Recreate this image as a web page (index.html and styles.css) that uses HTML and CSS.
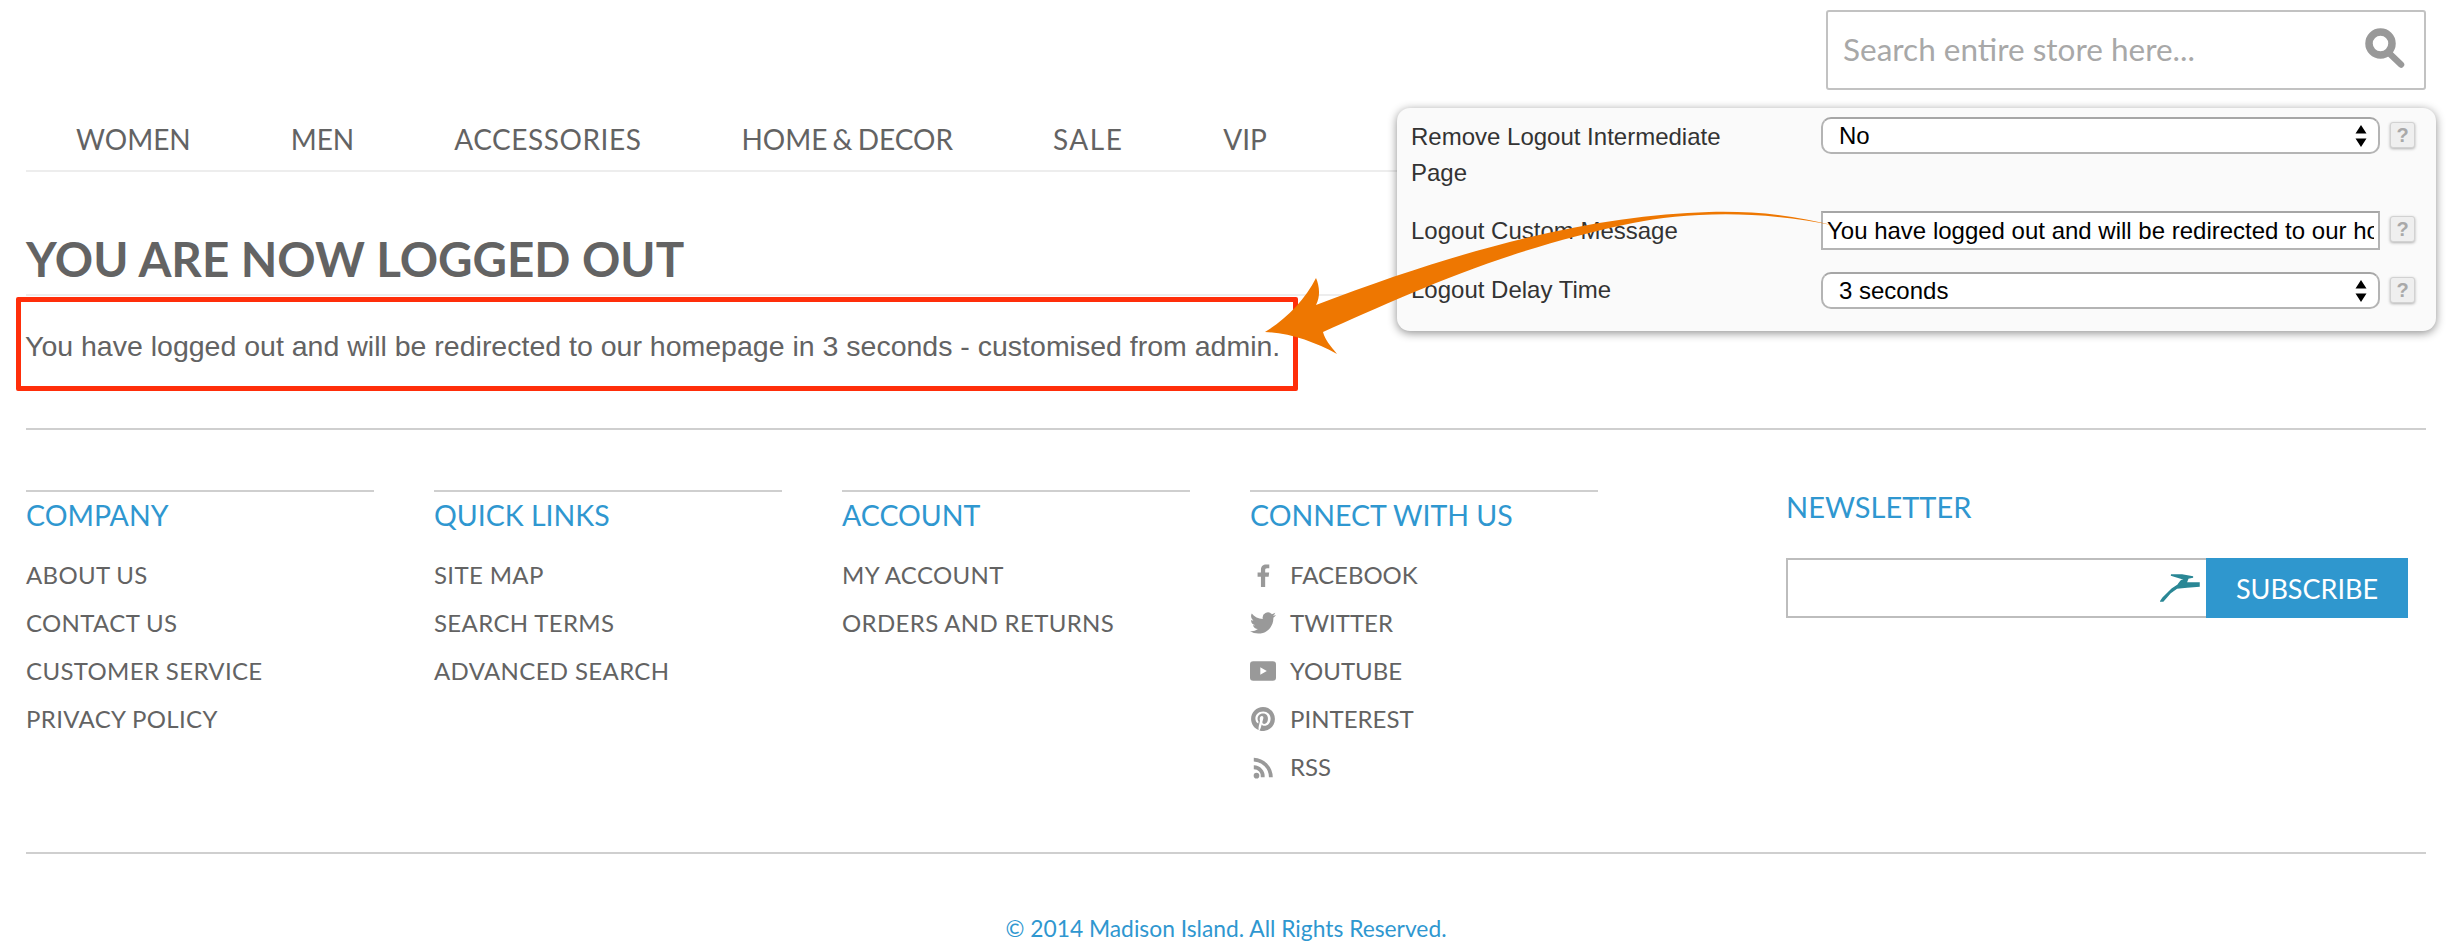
FILE: index.html
```html
<!DOCTYPE html>
<html lang="en">
<head>
<meta charset="utf-8">
<title>You are now logged out</title>
<link rel="stylesheet" href="styles.css">
</head>
<body>
<div class="page">
  <header class="top">
    <form class="search">
      <input class="search-input" type="text" placeholder="Search entire store here...">
      <svg class="search-icon" viewBox="0 0 40 40"><circle cx="15.500" cy="15.500" r="11.500" fill="none" stroke="#999" stroke-width="7.500"/><path d="M24 25l12 11.500" stroke="#999" stroke-width="6.500" stroke-linecap="round"/></svg>
    </form>
  </header>
  <nav class="nav">
    <a>WOMEN</a><a>MEN</a><a class="nav-acc">ACCESSORIES</a><a class="nav-home">HOME &amp; DECOR</a><a class="nav-sale">SALE</a><a>VIP</a>
  </nav>
  <main class="main">
    <h1 class="title">YOU ARE NOW LOGGED OUT</h1>
    <p class="message">You have logged out and will be redirected to our homepage in 3 seconds - customised from admin.</p>
  </main>
  <footer class="footer">
    <div class="cols">
      <section class="col">
        <h2 class="col-title">COMPANY</h2>
        <ul class="links"><li>ABOUT US</li><li>CONTACT US</li><li>CUSTOMER SERVICE</li><li>PRIVACY POLICY</li></ul>
      </section>
      <section class="col">
        <h2 class="col-title">QUICK LINKS</h2>
        <ul class="links"><li>SITE MAP</li><li>SEARCH TERMS</li><li>ADVANCED SEARCH</li></ul>
      </section>
      <section class="col">
        <h2 class="col-title">ACCOUNT</h2>
        <ul class="links"><li>MY ACCOUNT</li><li>ORDERS AND RETURNS</li></ul>
      </section>
      <section class="col">
        <h2 class="col-title">CONNECT WITH US</h2>
        <ul class="links social">
          <li><svg class="soc" viewBox="0 0 24 24"><path d="M14 23v-9.500h3.200l.5-3.700H14V7.500c0-1.100.3-1.800 1.800-1.800h2V2.400c-.4 0-1.500-.2-2.900-.2-2.800 0-4.800 1.700-4.800 4.900v2.700H7v3.700h3.100V23z"/></svg>FACEBOOK</li>
          <li><svg class="soc" viewBox="0 0 24 24"><path d="M23.950 4.570a10 10 0 0 1-2.820.77 4.960 4.960 0 0 0 2.160-2.720c-.95.55-2 .96-3.120 1.190a4.920 4.920 0 0 0-8.380 4.480C7.690 8.100 4.070 6.130 1.640 3.160a4.900 4.900 0 0 0-.66 2.470c0 1.710.87 3.210 2.190 4.100a4.900 4.900 0 0 1-2.230-.61v.06a4.920 4.920 0 0 0 3.950 4.830 5 5 0 0 1-2.210.08 4.940 4.940 0 0 0 4.600 3.420A9.870 9.870 0 0 1 0 19.540a14 14 0 0 0 7.560 2.210c9.050 0 14-7.500 14-13.980 0-.21 0-.42-.02-.63a9.940 9.940 0 0 0 2.460-2.550z"/></svg>TWITTER</li>
          <li><svg class="soc" viewBox="0 0 24 24"><rect x="0" y="3" width="24" height="18" rx="3"/><path d="M9.500 8.500l6 3.500-6 3.500z" fill="#fff"/></svg>YOUTUBE</li>
          <li><svg class="soc" viewBox="0 0 24 24"><path transform="translate(1 1) scale(.9167)" d="M12 0C5.370 0 0 5.370 0 12c0 5.080 3.160 9.420 7.630 11.170-.1-.95-.2-2.400.04-3.440.22-.94 1.400-5.960 1.400-5.960s-.36-.72-.36-1.780c0-1.670.97-2.920 2.170-2.920 1.020 0 1.520.77 1.520 1.690 0 1.030-.66 2.570-.99 4-.28 1.190.6 2.160 1.780 2.160 2.130 0 3.770-2.250 3.770-5.490 0-2.870-2.060-4.870-5.010-4.870-3.410 0-5.420 2.560-5.420 5.200 0 1.030.4 2.140.89 2.740.1.120.11.220.08.340l-.33 1.360c-.05.220-.17.270-.4.160-1.500-.7-2.430-2.890-2.430-4.650 0-3.780 2.750-7.260 7.920-7.260 4.160 0 7.390 2.970 7.390 6.930 0 4.130-2.610 7.460-6.230 7.460-1.210 0-2.360-.63-2.750-1.380l-.75 2.850c-.27 1.040-1 2.350-1.490 3.150A12 12 0 0 0 24 12c0-6.630-5.370-12-12-12z"/></svg>PINTEREST</li>
          <li><svg class="soc" viewBox="0 0 24 24"><circle cx="6" cy="20" r="2.600"/><path d="M3.500 10.500v3.500a6.500 6.500 0 0 1 6.500 7.500h3.500A10 10 0 0 0 3.500 10.500z"/><path d="M3.500 3.500v3.500A14.500 14.500 0 0 1 17.500 21.500H21A18 18 0 0 0 3.500 3.500z"/></svg>RSS</li>
        </ul>
      </section>
      <section class="news">
        <h2 class="news-title">NEWSLETTER</h2>
        <form class="news-form">
          <div class="news-field">
            <input class="news-input" type="text" aria-label="Email">
            <svg class="gazelle" viewBox="0 0 40 28"><path d="M1 27L3 24 12 15 18 11 21 7 24 5 11 1 22 1 33 3 28 4 26 9 39 9 39 12 27 13 17 14 10 19 3 27z"/></svg>
          </div>
          <button class="news-btn" type="button">SUBSCRIBE</button>
        </form>
      </section>
    </div>
    <div class="copyright">© 2014 Madison Island. All Rights Reserved.</div>
  </footer>
</div>

<div class="highlight"></div>

<aside class="panel">
  <label class="p-label">Remove Logout Intermediate Page</label>
  <div class="p-field">
    <select class="p-select"><option>No</option></select>
    <svg class="updown" viewBox="0 0 12 22"><path d="M6 0l5.500 8.500H.5zM6 22l5.500-8.500H.5z"/></svg>
  </div>
  <span class="help">?</span>

  <label class="p-label">Logout Custom Message</label>
  <div class="p-field">
    <input class="p-text" type="text" value="You have logged out and will be redirected to our homepage in 3 seconds - customised from admin.">
  </div>
  <span class="help">?</span>

  <label class="p-label p-label-last">Logout Delay Time</label>
  <div class="p-field">
    <select class="p-select"><option>3 seconds</option></select>
    <svg class="updown" viewBox="0 0 12 22"><path d="M6 0l5.500 8.500H.5zM6 22l5.500-8.500H.5z"/></svg>
  </div>
  <span class="help">?</span>
</aside>

<svg class="arrow" viewBox="0 0 600 170"><path d="M586 26C540 14 500 11 459 12 350 15 225 44 66 105 71 95 69 85 66 78 55 100 35 120 15 132 40 133 65 142 87 154 80 145 75 140 73 132 150 98 250 50 383 23 430 14 500 8 586 26z"/></svg>
</body>
</html>
```
FILE: styles.css
```css
* { box-sizing: border-box; }
html, body { margin: 0; padding: 0; }
body {
  background: #fff;
  color: #636363;
  font-family: "Lato", "Liberation Sans", sans-serif;
  height: 946px;
  overflow: hidden;
  position: relative;
}
h1, h2, p, ul { margin: 0; padding: 0; }
ul { list-style: none; }

.page { padding: 0 22px 0 26px; }

.top {
  display: flex;
  justify-content: flex-end;
  height: 110px;
  padding-top: 10px;
}
.search { position: relative; width: 600px; height: 80px; }
.search-input {
  width: 100%;
  height: 100%;
  border: 2px solid #c2c2c2;
  border-radius: 3px;
  padding: 0 80px 3px 15px;
  font: 400 31.500px "Lato", sans-serif;
  color: #636363;
  outline: none;
  background: #fff;
}
.search-input::placeholder { color: #a8a8a8; opacity: 1; }
.search-icon { position: absolute; right: 21px; top: 18px; width: 40px; height: 40px; }

.nav {
  display: flex;
  gap: 100px;
  height: 62px;
  padding-left: 50px;
  align-items: flex-start;
  border-bottom: 2px solid #ededed;
  font-size: 28px;
  line-height: 36px;
  padding-top: 11px;
}
.nav-acc { letter-spacing: .55px; }
.nav-home { word-spacing: -2px; }
.nav-sale { letter-spacing: 1.500px; }

.title {
  height: 124px;
  padding-top: 64px;
  border-bottom: 2px solid #ededed;
  font-size: 47.500px;
  line-height: 46px;
  font-weight: 700;
  color: #636363;
}
.main { border-bottom: 2px solid #cfcfcf; height: 258px; }
.message {
  padding-top: 34px;
  margin-left: -1px;
  font: 400 28.500px/32px "Liberation Sans", Arial, sans-serif;
  color: #636363;
}

.cols {
  display: flex;
  gap: 60px;
  height: 364px;
  margin-top: 60px;
  border-bottom: 2px solid #cfcfcf;
}
.col { width: 348px; border-top: 2px solid #cfcfcf; }
.col-title {
  font-size: 28.500px;
  line-height: 46px;
  font-weight: 400;
  color: #2f97d0;
  margin-bottom: 13px;
}
.links li {
  font-size: 24px;
  letter-spacing: .35px;
  line-height: 48px;
  height: 48px;
  color: #636363;
  display: flex;
  align-items: center;
}
.social li { letter-spacing: 0; }
.soc { width: 26px; height: 26px; fill: #999; margin-right: 14px; flex: none; }

.news { width: 622px; margin-left: 128px; }
.news-title {
  font-size: 29px;
  line-height: 34px;
  font-weight: 400;
  color: #2f97d0;
  margin-bottom: 34px;
}
.news-form { display: flex; height: 60px; }
.news-field { position: relative; width: 420px; }
.news-input {
  width: 100%;
  height: 100%;
  border: 2px solid #bdbdbd;
  border-right: 0;
  background: #fff;
  outline: none;
}
.gazelle {
  position: absolute;
  right: 6px;
  top: 16px;
  width: 40px;
  height: 28px;
  fill: #2a8795;
  stroke: #2a8795;
  stroke-width: 1.500;
}
.news-btn {
  width: 202px;
  height: 60px;
  border: 0;
  background: #2f97ce;
  color: #fff;
  font: 400 27px "Lato", sans-serif;
  padding: 0;
}

.copyright {
  text-align: center;
  color: #2f97d0;
  font-size: 22.800px;
  line-height: 30px;
  padding-top: 59px;
}

.highlight {
  position: absolute;
  left: 16px;
  top: 297px;
  width: 1282px;
  height: 94px;
  border: 5px solid #ff2e0a;
  border-radius: 2px;
}

.panel {
  position: absolute;
  left: 1397px;
  top: 108px;
  width: 1039px;
  height: 223px;
  background: #fafafa;
  border-radius: 13px;
  box-shadow: 0 2px 10px rgba(0, 0, 0, .45);
  display: grid;
  grid-template-columns: 410px 559px 25px;
  grid-template-rows: 94px 61px 37px;
  column-gap: 0;
  padding: 9px 0 0 14px;
  font: 400 24px "Liberation Sans", Arial, sans-serif;
  color: #333;
}
.p-label { display: block; line-height: 36px; width: 330px; padding-top: 2px; color: #333; }
.p-label-last { padding-top: 0; }
.p-field { position: relative; }
.p-select {
  appearance: none;
  -webkit-appearance: none;
  width: 100%;
  height: 37px;
  border: 2px solid #b4b4b4;
  border-top-color: #a6a6a6;
  border-radius: 10px;
  background: #fff;
  color: #000;
  font: 400 24px "Liberation Sans", Arial, sans-serif;
  padding: 0 16px;
  display: block;
}
.p-text {
  width: 100%;
  height: 39px;
  border: 2px solid #b4b4b4;
  border-top-color: #a6a6a6;
  background: #fff;
  color: #000;
  font: 400 24px "Liberation Sans", Arial, sans-serif;
  padding: 1px 4px 0;
  display: block;
  outline: none;
}
.updown { position: absolute; right: 13px; top: 8px; width: 12px; height: 22px; fill: #000; }
.help {
  margin: 5px 0 0 10px;
  width: 25px;
  height: 26px;
  background: #efefef;
  border: 1px solid #d2d2d2;
  border-radius: 3px;
  box-shadow: 0 1px 3px rgba(0, 0, 0, .3);
  color: #a9a9a9;
  font: 700 20px/24px "Liberation Sans", Arial, sans-serif;
  text-align: center;
}

.arrow {
  position: absolute;
  left: 1250px;
  top: 200px;
  width: 600px;
  height: 170px;
  fill: #ee7701;
  pointer-events: none;
}
```
